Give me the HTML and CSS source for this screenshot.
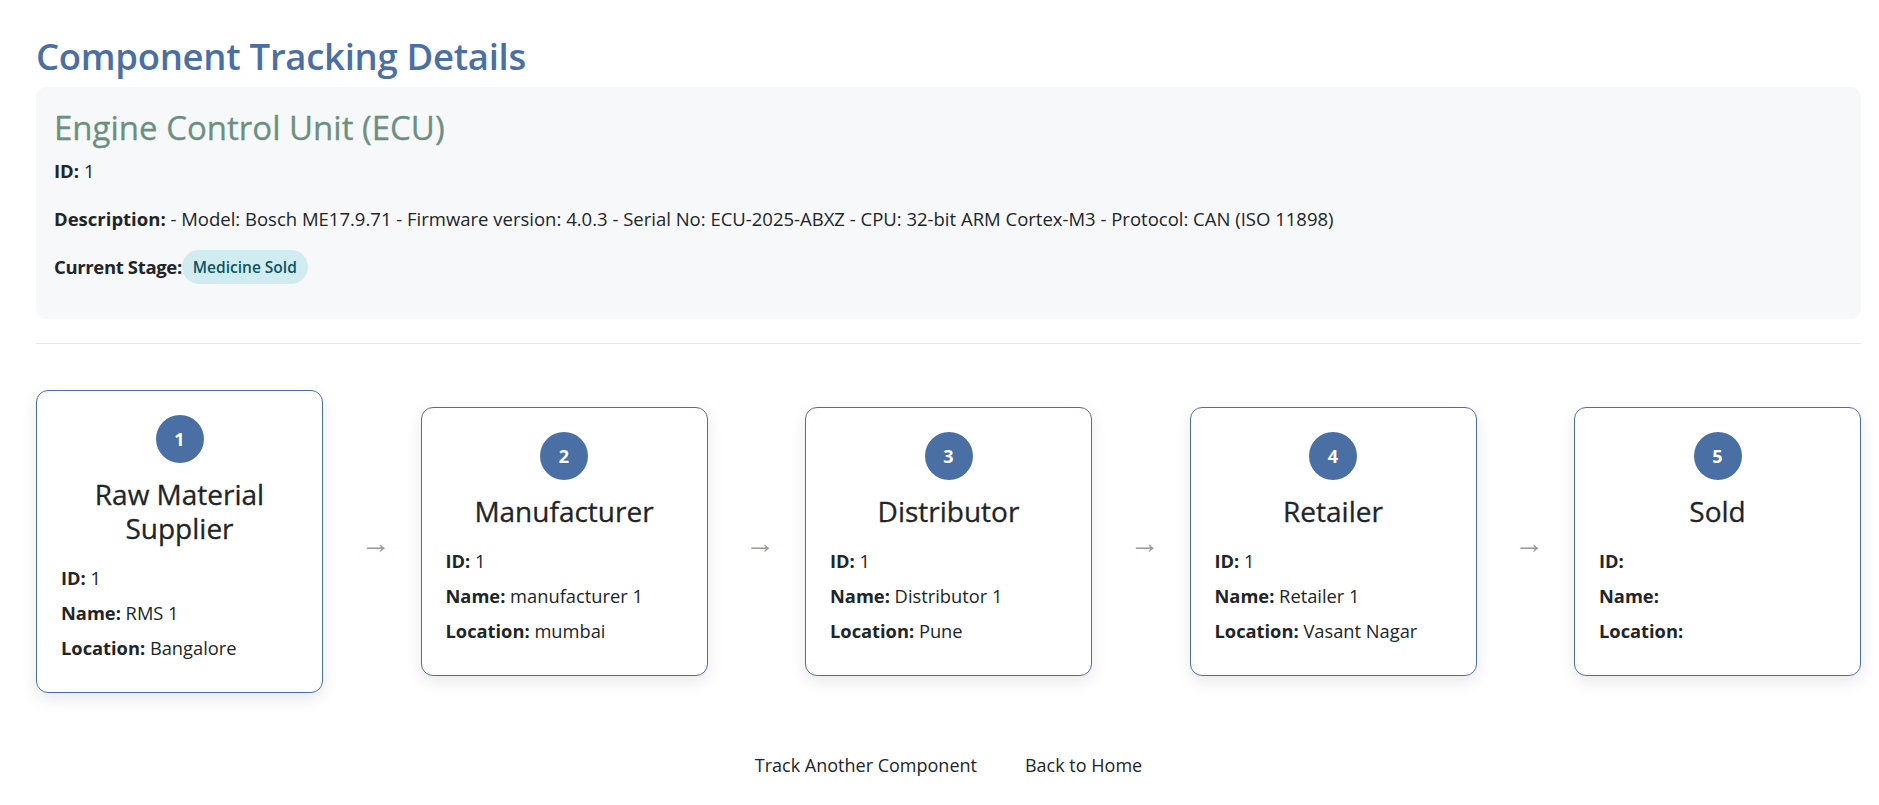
FILE: index.html
```html
<!DOCTYPE html>
<html lang="en">
<head>
<meta charset="utf-8">
<title>Component Tracking Details</title>
<link rel="stylesheet" href="styles.css">
</head>
<body>
<main class="page">
  <h1 class="title">Component Tracking Details</h1>

  <section class="info">
    <h2 class="info-name">Engine Control Unit (ECU)</h2>
    <p class="info-row"><strong>ID:</strong> 1</p>
    <p class="info-row"><strong>Description:</strong> - Model: Bosch ME17.9.71 - Firmware version: 4.0.3 - Serial No: ECU-2025-ABXZ - CPU: 32-bit ARM Cortex-M3 - Protocol: CAN (ISO 11898)</p>
    <p class="info-row stage-row"><strong class="stage-label">Current Stage:</strong><span class="badge">Medicine Sold</span></p>
  </section>

  <hr class="divider">

  <div class="flow">
    <div class="stage-card">
      <div class="step">1</div>
      <h3 class="stage-title">Raw Material Supplier</h3>
      <p class="field"><strong>ID:</strong> 1</p>
      <p class="field"><strong>Name:</strong> RMS 1</p>
      <p class="field"><strong>Location:</strong> Bangalore</p>
    </div>
    <div class="arrow">&rarr;</div>
    <div class="stage-card">
      <div class="step">2</div>
      <h3 class="stage-title">Manufacturer</h3>
      <p class="field"><strong>ID:</strong> 1</p>
      <p class="field"><strong>Name:</strong> manufacturer 1</p>
      <p class="field"><strong>Location:</strong> mumbai</p>
    </div>
    <div class="arrow">&rarr;</div>
    <div class="stage-card">
      <div class="step">3</div>
      <h3 class="stage-title">Distributor</h3>
      <p class="field"><strong>ID:</strong> 1</p>
      <p class="field"><strong>Name:</strong> Distributor 1</p>
      <p class="field"><strong>Location:</strong> Pune</p>
    </div>
    <div class="arrow">&rarr;</div>
    <div class="stage-card">
      <div class="step">4</div>
      <h3 class="stage-title">Retailer</h3>
      <p class="field"><strong>ID:</strong> 1</p>
      <p class="field"><strong>Name:</strong> Retailer 1</p>
      <p class="field"><strong>Location:</strong> Vasant Nagar</p>
    </div>
    <div class="arrow">&rarr;</div>
    <div class="stage-card">
      <div class="step">5</div>
      <h3 class="stage-title">Sold</h3>
      <p class="field"><strong>ID:</strong> </p>
      <p class="field"><strong>Name:</strong> </p>
      <p class="field"><strong>Location:</strong> </p>
    </div>
  </div>

  <nav class="actions">
    <a class="action" href="#">Track Another Component</a>
    <a class="action" href="#">Back to Home</a>
  </nav>
</main>
</body>
</html>
```

FILE: styles.css
```css
* { box-sizing: border-box; }

body {
  margin: 0;
  background: #ffffff;
  color: #212529;
  font-family: "Open Sans", "Noto Sans", "Liberation Sans", sans-serif;
  font-size: 20px;
  line-height: 24px;
}

.page {
  padding: 32px 18px 40px 36px;
}

.title {
  margin: 0 0 7px;
  font-size: 36.5px;
  line-height: 48px;
  font-weight: 600;
  color: #4a6fa5;
  letter-spacing: -0.3px;
}

.info {
  background: #f7f8fa;
  border-radius: 10px;
  padding: 22px 18px 35px;
}

.info-name {
  margin: 0 0 12px;
  font-size: 33px;
  line-height: 38px;
  font-weight: 500;
  color: #6b9080;
  -webkit-text-stroke: 0.3px #6b9080;
}

.info-row {
  margin: 0 0 24px;
  font-size: 18.5px;
}

.info-row:nth-of-type(2) { margin-bottom: 19px; }

.info-row:last-child { margin-bottom: 0; }

.stage-row {
  display: flex;
  align-items: center;
  gap: 0;
}

.stage-label {
  letter-spacing: -0.35px;
}

.badge {
  display: inline-block;
  padding: 5px 11px;
  height: 34px;
  line-height: 24px;
  border-radius: 17px;
  background: #d1ecf1;
  color: #0c5460;
  font-size: 15.5px;
  font-weight: 600;
}

.divider {
  margin: 24px 0 46px;
  border: 0;
  border-top: 1px solid #e6e7e9;
}

.flow {
  display: flex;
  align-items: center;
  justify-content: space-between;
}

.stage-card {
  width: 287px;
  border: 1px solid #4a6fa5;
  border-radius: 12px;
  background: #fff;
  padding: 24px 24px 32px;
  box-shadow: 0 6px 16px rgba(0, 0, 0, 0.09);
}

.step {
  width: 48px;
  height: 48px;
  margin: 0 auto 15px;
  border-radius: 50%;
  background: #4a6fa5;
  color: #fff;
  font-size: 18px;
  font-weight: 700;
  display: flex;
  align-items: center;
  justify-content: center;
}

.stage-title {
  margin: 0 0 21px;
  text-align: center;
  font-size: 28px;
  line-height: 33.6px;
  font-weight: 500;
  -webkit-text-stroke: 0.3px #212529;
}

.field {
  margin: 0 0 11px;
  font-size: 18.3px;
}

.field:last-child { margin-bottom: 0; }

.arrow {
  width: 22px;
  text-align: center;
  color: #9a9a9a;
  font-size: 30px;
  line-height: 28px;
}

.actions {
  display: flex;
  justify-content: center;
  gap: 48px;
  margin-top: 60px;
}

.action {
  color: #212529;
  text-decoration: none;
  font-size: 18px;
}
```
